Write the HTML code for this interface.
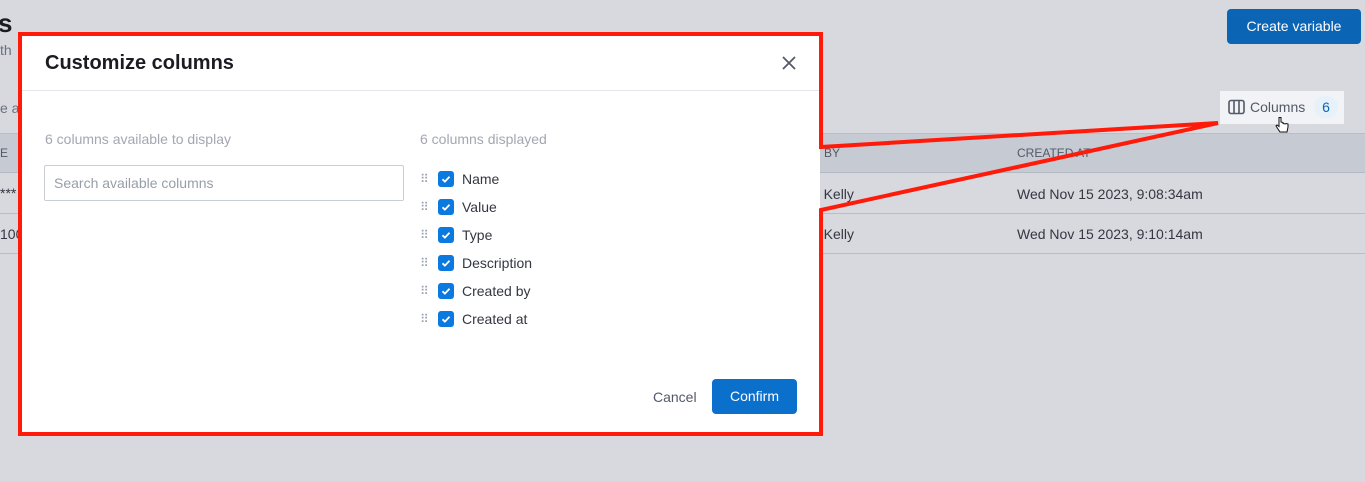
<!DOCTYPE html>
<html><head><meta charset="utf-8"><style>
*{box-sizing:border-box;margin:0;padding:0}
body{width:1365px;height:482px;background:#d8d9de;font-family:"Liberation Sans",sans-serif;position:relative;overflow:hidden;color:#343741}
.abs{position:absolute}
.t{font-size:14px;color:#343741;white-space:nowrap}
</style></head><body>
<div class="abs" style="left:-2px;top:8px;font-size:26px;font-weight:bold;color:#1a1c21">s</div>
<div class="abs t" style="left:0;top:42px;color:#69707d">th</div>
<div class="abs t" style="left:0;top:100px;color:#69707d">e a</div>
<div class="abs" style="left:1227px;top:9px;width:134px;height:35px;background:#0b64b4;border-radius:4px;color:#fff;font-size:14px;line-height:35px;text-align:center">Create variable</div>
<div class="abs" style="left:1220px;top:91px;width:124px;height:33px;background:#f1f3f6"></div>
<svg class="abs" style="left:1228px;top:99px" width="17" height="16" viewBox="0 0 17 16"><rect x="1" y="1.5" width="15" height="13" rx="2" fill="none" stroke="#535966" stroke-width="1.6"/><line x1="6" y1="2" x2="6" y2="14" stroke="#535966" stroke-width="1.6"/><line x1="11" y1="2" x2="11" y2="14" stroke="#535966" stroke-width="1.6"/></svg>
<div class="abs t" style="left:1250px;top:99px;color:#535966">Columns</div>
<div class="abs" style="left:1314px;top:96px;width:24px;height:22px;border-radius:11px;background:#e6f1fa;color:#0b64b4;font-size:14px;text-align:center;line-height:22px">6</div>
<svg class="abs" style="left:1275px;top:116px" width="14" height="18"><path d="M4 1.5v9l-2-1.5-1 1 4 6h7l1-5v-3l-2-.5-1 .5-2-.5V6.5L6 6V1.5Z" fill="#fff" stroke="#111" stroke-width="1"/></svg>
<div class="abs" style="left:0;top:133px;width:1365px;height:40px;background:#c6cad3;border-top:1px solid #b9bdc7;border-bottom:1px solid #b5b9c3"></div>
<div class="abs t" style="left:0;top:146px;font-size:12px;color:#535966">E</div>
<div class="abs t" style="left:812px;top:146px;font-size:12px;color:#535966">D BY</div>
<div class="abs t" style="left:1017px;top:146px;font-size:12px;color:#535966">CREATED AT</div>
<div class="abs" style="left:0;top:213px;width:1365px;height:1px;background:#b9bdc7"></div>
<div class="abs" style="left:0;top:253px;width:1365px;height:1px;background:#b9bdc7"></div>
<div class="abs t" style="left:0;top:185px">***</div>
<div class="abs t" style="left:0;top:226px">100</div>
<div class="abs t" style="left:808px;top:186px">th Kelly</div>
<div class="abs t" style="left:812px;top:226px">h Kelly</div>
<div class="abs t" style="left:1017px;top:186px">Wed Nov 15 2023, 9:08:34am</div>
<div class="abs t" style="left:1017px;top:226px">Wed Nov 15 2023, 9:10:14am</div>

<div class="abs" style="left:21px;top:35px;width:799px;height:398px;background:#fff"></div>
<div class="abs" style="left:22px;top:90px;width:798px;height:1px;background:#e3e6eb"></div>
<div class="abs" style="left:45px;top:52px;font-size:20px;font-weight:bold;color:#1a1c21">Customize columns</div>
<svg class="abs" style="left:781px;top:55px" width="16" height="16"><path d="M2 2L14 14M14 2L2 14" stroke="#535966" stroke-width="1.8"/></svg>
<div class="abs t" style="left:45px;top:131px;color:#a2a7b1">6 columns available to display</div>
<div class="abs" style="left:44px;top:165px;width:360px;height:36px;border:1px solid #c9cdd5;border-radius:2px"></div>
<div class="abs t" style="left:54px;top:175px;color:#989ea9">Search available columns</div>
<div class="abs t" style="left:420px;top:131px;color:#a2a7b1">6 columns displayed</div>
<div class="abs" style="left:420px;top:170px">
<div style="position:relative;height:28px"><span style="position:absolute;left:0;top:2px;color:#98a2b3;font-size:12px">⠿</span><svg style="position:absolute;left:18px;top:1px" width="16" height="16"><rect width="16" height="16" rx="3" fill="#0b7ae0"/><path d="M4.5 8.3l2.4 2.3 4.6-4.8" stroke="#fff" stroke-width="1.8" fill="none"/></svg><span class="t" style="position:absolute;left:42px;top:1px">Name</span></div>
<div style="position:relative;height:28px"><span style="position:absolute;left:0;top:2px;color:#98a2b3;font-size:12px">⠿</span><svg style="position:absolute;left:18px;top:1px" width="16" height="16"><rect width="16" height="16" rx="3" fill="#0b7ae0"/><path d="M4.5 8.3l2.4 2.3 4.6-4.8" stroke="#fff" stroke-width="1.8" fill="none"/></svg><span class="t" style="position:absolute;left:42px;top:1px">Value</span></div>
<div style="position:relative;height:28px"><span style="position:absolute;left:0;top:2px;color:#98a2b3;font-size:12px">⠿</span><svg style="position:absolute;left:18px;top:1px" width="16" height="16"><rect width="16" height="16" rx="3" fill="#0b7ae0"/><path d="M4.5 8.3l2.4 2.3 4.6-4.8" stroke="#fff" stroke-width="1.8" fill="none"/></svg><span class="t" style="position:absolute;left:42px;top:1px">Type</span></div>
<div style="position:relative;height:28px"><span style="position:absolute;left:0;top:2px;color:#98a2b3;font-size:12px">⠿</span><svg style="position:absolute;left:18px;top:1px" width="16" height="16"><rect width="16" height="16" rx="3" fill="#0b7ae0"/><path d="M4.5 8.3l2.4 2.3 4.6-4.8" stroke="#fff" stroke-width="1.8" fill="none"/></svg><span class="t" style="position:absolute;left:42px;top:1px">Description</span></div>
<div style="position:relative;height:28px"><span style="position:absolute;left:0;top:2px;color:#98a2b3;font-size:12px">⠿</span><svg style="position:absolute;left:18px;top:1px" width="16" height="16"><rect width="16" height="16" rx="3" fill="#0b7ae0"/><path d="M4.5 8.3l2.4 2.3 4.6-4.8" stroke="#fff" stroke-width="1.8" fill="none"/></svg><span class="t" style="position:absolute;left:42px;top:1px">Created by</span></div>
<div style="position:relative;height:28px"><span style="position:absolute;left:0;top:2px;color:#98a2b3;font-size:12px">⠿</span><svg style="position:absolute;left:18px;top:1px" width="16" height="16"><rect width="16" height="16" rx="3" fill="#0b7ae0"/><path d="M4.5 8.3l2.4 2.3 4.6-4.8" stroke="#fff" stroke-width="1.8" fill="none"/></svg><span class="t" style="position:absolute;left:42px;top:1px">Created at</span></div>
</div>
<div class="abs t" style="left:653px;top:389px;color:#535966">Cancel</div>
<div class="abs" style="left:712px;top:379px;width:85px;height:35px;background:#0b70cc;border-radius:4px;color:#fff;font-size:14px;line-height:35px;text-align:center">Confirm</div>

<svg class="abs" style="left:0;top:0" width="1365" height="482">
<path d="M20 34H821V147L1218 123L821 210V434H20Z" fill="none" stroke="#ff1a0a" stroke-width="4" stroke-linejoin="miter"/>
</svg>
</body></html>
